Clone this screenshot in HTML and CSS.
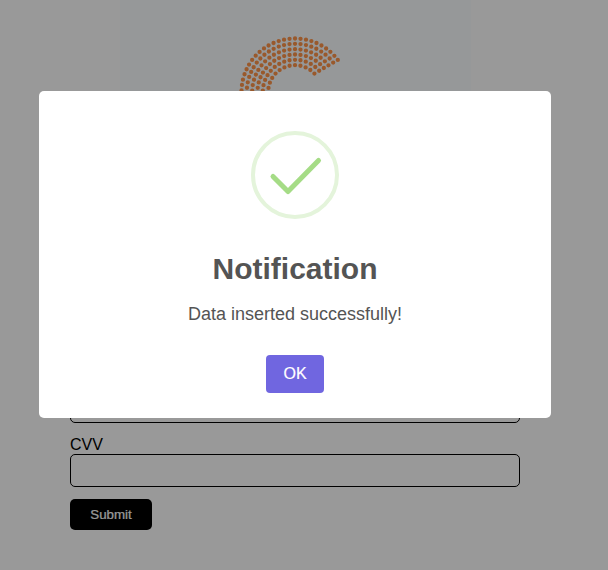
FILE: index.html
```html
<!DOCTYPE html>
<html lang="en">
<head>
<meta charset="utf-8">
<title>Payment</title>
<link rel="stylesheet" href="styles.css">
</head>
<body>
<main class="page">
  <div class="banner">
    <svg class="logo" viewBox="-60 -60 120 120" width="120" height="120">
      <path pathLength="39.5" d="M42.8-32.1A53.5 53.5 0 1 0 0 53.5"/>
      <path pathLength="35.5" d="M38.17-29.43A48.2 48.2 0 1 0 0 48.2"/>
      <path pathLength="31.5" d="M33.46-26.68A42.8 42.8 0 1 0 0 42.8"/>
      <path pathLength="27.5" d="M28.83-23.99A37.5 37.5 0 1 0 0 37.5"/>
      <path pathLength="23.5" d="M24.17-21.27A32.2 32.2 0 1 0 0 32.2"/>
      <path pathLength="19.5" d="M19.42-18.46A26.8 26.8 0 1 0 0 26.8"/>
    </svg>
  </div>
  <form class="form">
    <input class="field" type="text">
    <label class="label" for="cvv">CVV</label>
    <input class="field" id="cvv" type="text">
    <button class="submit" type="button">Submit</button>
  </form>
</main>
<div class="overlay">
  <section class="modal" role="dialog">
    <svg class="check" viewBox="0 0 88 88" width="88" height="88">
      <circle cx="44" cy="44" r="42"/>
      <path d="M22 45.5L37 60.5L67.5 29.5"/>
    </svg>
    <h2 class="title">Notification</h2>
    <p class="message">Data inserted successfully!</p>
    <button class="ok" type="button">OK</button>
  </section>
</div>
</body>
</html>
```
FILE: styles.css
```css
* {
  box-sizing: border-box;
}

body {
  margin: 0;
  height: 570px;
  overflow: hidden;
  background: #fff;
  font-family: "Liberation Sans", Arial, sans-serif;
}

.page {
  width: 590px;
  height: 570px;
}

.banner {
  display: flex;
  justify-content: center;
  width: 351px;
  height: 350px;
  margin: 0 auto;
  padding-top: 32px;
  background: #fafdff;
}

.logo {
  fill: none;
  stroke: #ff954a;
  stroke-width: 4.3;
  stroke-linecap: round;
  stroke-dasharray: 0 1;
}

.form {
  display: flex;
  flex-direction: column;
  width: 450px;
  margin: 40px auto 0;
}

.field {
  width: 100%;
  height: 33px;
  margin: 0 0 12px;
  border: 1px solid #000;
  border-radius: 5px;
  background: transparent;
}

.label {
  height: 19px;
  font-size: 16px;
  line-height: 19px;
}

.submit {
  width: 82px;
  height: 31px;
  padding: 0;
  border: 0;
  border-radius: 5px;
  background: #000;
  color: #fff;
  font: 13.333px "Liberation Sans", Arial, sans-serif;
  -webkit-text-stroke: 0.2px #fff;
}

.overlay {
  position: fixed;
  inset: 0;
  padding: 91px 0 0 39px;
  background: rgba(0, 0, 0, 0.4);
}

.modal {
  display: flex;
  flex-direction: column;
  align-items: center;
  width: 512px;
  height: 327px;
  padding-top: 40px;
  border-radius: 5px;
  background: #fff;
  color: #545454;
}

.check {
  fill: none;
  stroke-linecap: round;
  stroke-linejoin: round;
}

.check circle {
  stroke: #e4f4db;
  stroke-width: 4;
}

.check path {
  stroke: #a5dc86;
  stroke-width: 5;
}

.title {
  margin: 32px 0 0;
  font-size: 30px;
  line-height: 36px;
}

.message {
  margin: 17px 0 0;
  font-size: 18px;
  line-height: 20px;
}

.ok {
  width: 58px;
  height: 38px;
  margin-top: 31px;
  padding: 0;
  border: 0;
  border-radius: 4px;
  background: #7066e0;
  color: #fff;
  font: 16px "Liberation Sans", Arial, sans-serif;
  -webkit-text-stroke: 0.2px #fff;
}
```
